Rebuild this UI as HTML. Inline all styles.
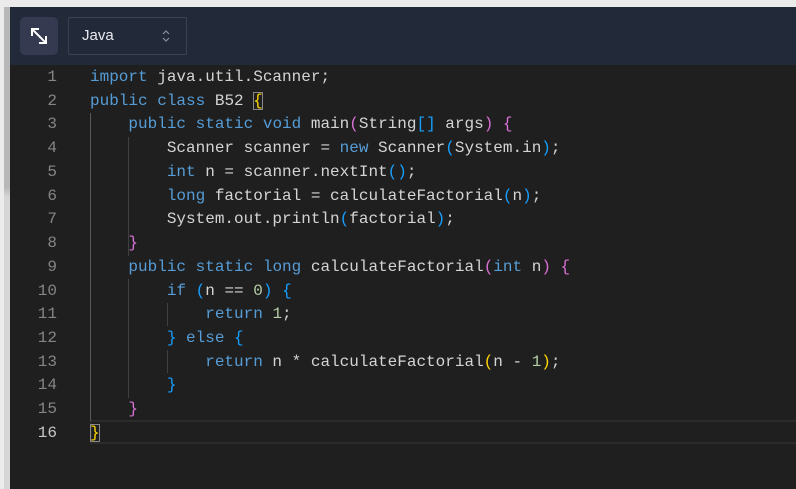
<!DOCTYPE html>
<html><head><meta charset="utf-8"><style>
html,body{margin:0;padding:0;width:796px;height:489px;overflow:hidden;background:#ebebeb;}
.strip{position:absolute;left:0;top:7px;width:10px;height:482px;background:linear-gradient(to bottom,#b8b8b8 0,#b8b8b8 180px,#d6d6d6 190px,#d6d6d6 100%);}
.strip:before{content:"";position:absolute;left:0;top:0;width:4px;height:100%;background:#ececec;}
.ed{position:absolute;left:10px;top:7px;width:786px;height:482px;background:#1f1f1f;}
.tb{position:absolute;left:0;top:0;width:786px;height:58px;background:#222a39;}
.btn{position:absolute;left:10px;top:10px;width:38px;height:38px;border-radius:5px;background:#363a50;}
.sel{position:absolute;left:58px;top:10px;width:117px;height:36px;border:1px solid #3a4152;border-radius:2px;}
.sel span{position:absolute;left:13px;top:9px;color:#e8e8ee;font:15px "Liberation Sans",sans-serif;}
.code{position:absolute;left:0;top:59px;width:786px;font:16px/23.73px "Liberation Mono",monospace;color:#d4d4d4;}
.ln{position:absolute;left:0;width:47px;text-align:right;color:#858585;}
.l{position:absolute;left:80px;white-space:pre;}
.k{color:#569cd6}.n{color:#b5cea8}
.g{color:#ffd700}.p{color:#da70d6}.b{color:#179fff}
.box{outline:1px solid #888;outline-offset:-1px}
.guide{position:absolute;width:1px;background:#404040;}
.cur{position:absolute;left:80px;width:706px;height:20px;border:2px solid #2b2b2b;box-sizing:content-box;}
</style></head><body>
<div class="strip"></div>
<div class="ed">
<div class="tb">
<div class="btn"><svg width="38" height="38" viewBox="0 0 38 38"><g stroke="#fff" stroke-width="2" fill="none" stroke-linecap="square"><path d="M13 13L25 25"/><path d="M12 18V12H18"/><path d="M26 20V26H20"/></g></svg></div>
<div class="sel"><span>Java</span><svg style="position:absolute;left:92px;top:11px" width="10" height="14" viewBox="0 0 10 14"><path d="M2 5L5 2L8 5M2 9L5 12L8 9" stroke="#8a90a0" stroke-width="1.2" fill="none"/></svg></div>
</div>
<div class="code">
<div class="cur" style="top:354px"></div>
<div class="guide" style="left:80px;top:47px;height:308px;background:#5a5a5a"></div>
<div class="guide" style="left:118px;top:71px;height:119px"></div>
<div class="guide" style="left:118px;top:213px;height:119px"></div>
<div class="guide" style="left:157px;top:237px;height:23px"></div>
<div class="guide" style="left:157px;top:284px;height:23px"></div>
<div class="ln" style="top:0">1</div><div class="l" style="top:0"><span class="k">import</span> java.util.Scanner;</div>
<div class="ln" style="top:23.73px">2</div><div class="l" style="top:23.73px"><span class="k">public</span> <span class="k">class</span> B52 <span class="g box">{</span></div>
<div class="ln" style="top:47.46px">3</div><div class="l" style="top:47.46px">    <span class="k">public</span> <span class="k">static</span> <span class="k">void</span> main<span class="p">(</span>String<span class="b">[]</span> args<span class="p">)</span> <span class="p">{</span></div>
<div class="ln" style="top:71.19px">4</div><div class="l" style="top:71.19px">        Scanner scanner = <span class="k">new</span> Scanner<span class="b">(</span>System.in<span class="b">)</span>;</div>
<div class="ln" style="top:94.92px">5</div><div class="l" style="top:94.92px">        <span class="k">int</span> n = scanner.nextInt<span class="b">()</span>;</div>
<div class="ln" style="top:118.65px">6</div><div class="l" style="top:118.65px">        <span class="k">long</span> factorial = calculateFactorial<span class="b">(</span>n<span class="b">)</span>;</div>
<div class="ln" style="top:142.38px">7</div><div class="l" style="top:142.38px">        System.out.println<span class="b">(</span>factorial<span class="b">)</span>;</div>
<div class="ln" style="top:166.11px">8</div><div class="l" style="top:166.11px">    <span class="p">}</span></div>
<div class="ln" style="top:189.84px">9</div><div class="l" style="top:189.84px">    <span class="k">public</span> <span class="k">static</span> <span class="k">long</span> calculateFactorial<span class="p">(</span><span class="k">int</span> n<span class="p">)</span> <span class="p">{</span></div>
<div class="ln" style="top:213.57px">10</div><div class="l" style="top:213.57px">        <span class="k">if</span> <span class="b">(</span>n == <span class="n">0</span><span class="b">)</span> <span class="b">{</span></div>
<div class="ln" style="top:237.3px">11</div><div class="l" style="top:237.3px">            <span class="k">return</span> <span class="n">1</span>;</div>
<div class="ln" style="top:261.03px">12</div><div class="l" style="top:261.03px">        <span class="b">}</span> <span class="k">else</span> <span class="b">{</span></div>
<div class="ln" style="top:284.76px">13</div><div class="l" style="top:284.76px">            <span class="k">return</span> n * calculateFactorial<span class="g">(</span>n - <span class="n">1</span><span class="g">)</span>;</div>
<div class="ln" style="top:308.49px">14</div><div class="l" style="top:308.49px">        <span class="b">}</span></div>
<div class="ln" style="top:332.22px">15</div><div class="l" style="top:332.22px">    <span class="p">}</span></div>
<div class="ln" style="top:355.95px;color:#c6c6c6">16</div><div class="l" style="top:355.95px"><span class="g box">}</span></div>
</div>
</div>
</body></html>
